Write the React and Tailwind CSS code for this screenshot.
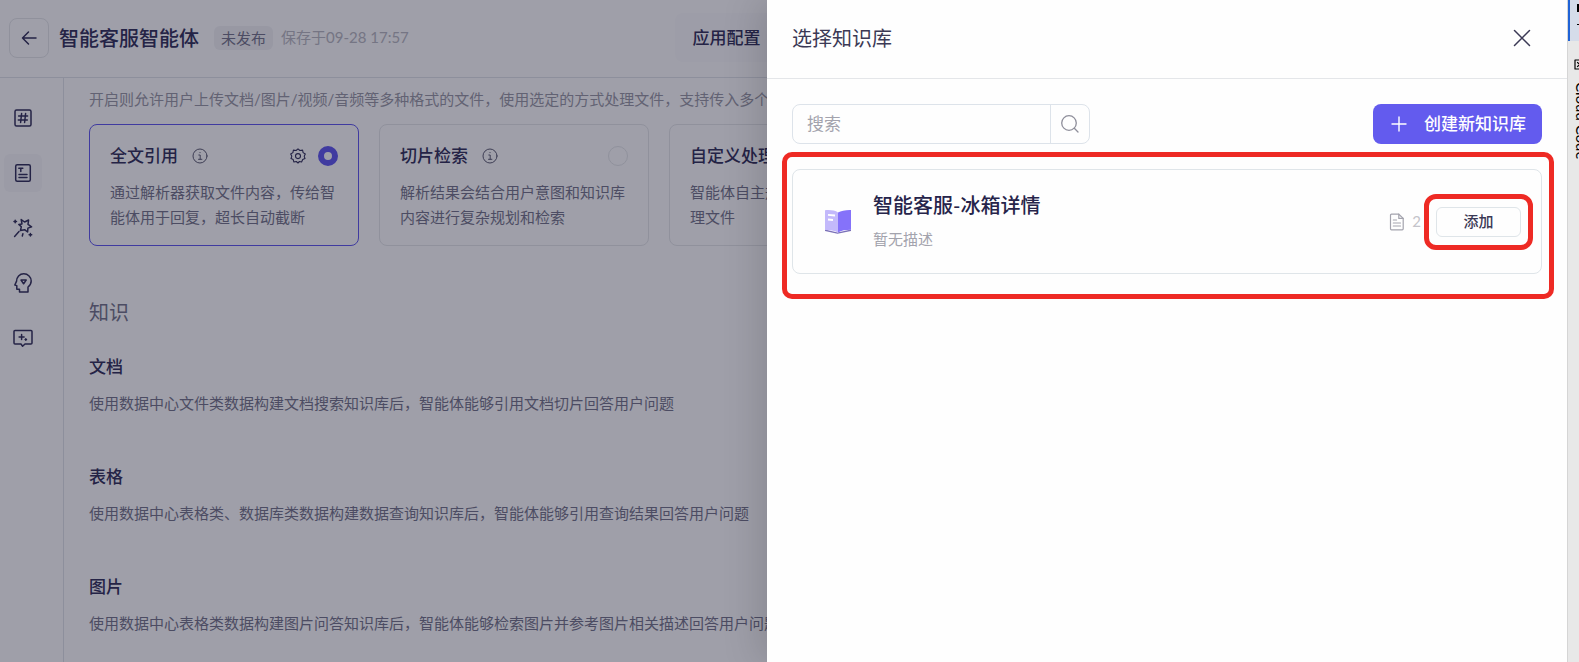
import React from "react";

const stroke = {
  fill: "none",
  stroke: "currentColor",
  strokeLinecap: "round",
  strokeLinejoin: "round",
};

function HashIcon() {
  return (
    <svg viewBox="0 0 20 20" className="size-5" strokeWidth="1.5" {...stroke}>
      <rect x="2" y="2" width="16" height="16" rx="1.5" />
      <path d="M8.6 5.5 7.6 14.5M12.6 5.5 11.6 14.5M5.6 8H14.6M5.3 12H14.3" />
    </svg>
  );
}

function TextDocIcon() {
  return (
    <svg viewBox="0 0 20 20" className="size-5" strokeWidth="1.5" {...stroke}>
      <rect x="2.7" y="1.7" width="14.6" height="16.6" rx="1.5" />
      <path d="M5.8 5.2H9.8M7.8 5.2V8.6M6 11.4H14M6 14.6H14" />
    </svg>
  );
}

function WandIcon() {
  return (
    <svg viewBox="0 0 20 20" className="size-5" strokeWidth="1.5" {...stroke}>
      <path d="M8.2 1.6 11.6 4 15.6 2 15 6.300 18.600 8.800 14.900 10.100 14.600 14 11.600 11.700 7.400 12.600 8.300 8.800 5.800 6.400 9 5.900Z" />
      <path d="M6 13.600 1.600 18.400M2.200 2.200V4.800M1 3.500H3.500M17.400 15.400V18M16.100 16.700H18.700M9.900 15.800 9.300 18" />
    </svg>
  );
}

function HeadIcon() {
  return (
    <svg viewBox="0 0 20 20" className="size-5" strokeWidth="1.5" {...stroke}>
      <path d="M6.500 19V16.200H3.800V12.600L1.800 12 3.500 8.400C3.500 4.200 6.600 .8 10.800 .8 15 .8 18.200 4.100 18.200 8 18.200 10.800 16.800 12.600 15 14V19Z" />
      <path d="M8 7H13.200L10.600 10.800Z" />
    </svg>
  );
}

function ChatSparkIcon() {
  return (
    <svg viewBox="0 0 20 20" className="size-5" strokeWidth="1.5" {...stroke}>
      <path d="M2 2.5H18A1 1 0 0 1 19 3.500V15A1 1 0 0 1 18 16H12L9.600 18.200 8 16H2A1 1 0 0 1 1 15V3.500A1 1 0 0 1 2 2.500Z" />
      <path d="M8.600 6.500V11.500M6.100 9H11.100M12.800 10.800V12.200M12.100 11.500H13.500" />
    </svg>
  );
}

function InfoIcon() {
  return (
    <svg viewBox="0 0 16 16" className="size-4 text-[#5d5d72]" strokeWidth="1" {...stroke}>
      <circle cx="8" cy="8" r="7" />
      <path d="M6.800 7H8.200V11.300M6.500 11.300H9.900M8 4.500V4.700" />
    </svg>
  );
}

function GearIcon() {
  return (
    <svg viewBox="0 0 16 16" className="size-4" strokeWidth="1.100" {...stroke}>
      <path d="M8 .9 9.900 2.500 12.600 2.100 13.100 4.600 15.300 6 14.200 8.200 15 10.600 12.700 11.600 11.600 14 9.400 13.500 8 15 6.300 13.500 3.900 14 3.200 11.600 1 10.600 1.800 8.200.7 6 2.900 4.600 3.400 2.100 6.100 2.500Z" />
      <circle cx="8" cy="8.100" r="2.500" />
    </svg>
  );
}

function BookIcon() {
  return (
    <svg viewBox="0 0 28 26" className="h-[26px] w-7">
      <path d="M1 20.500 13.500 23.500 27 20.500V22L13.500 24.800 1 22Z" fill="#7a70b8" />
      <path d="M1 1.200C6 .8 11 1.200 14 3.500V23.500C10.500 21.500 5.500 21 1 21Z" fill="#c3b9fb" />
      <path d="M14 3.500C17 1.800 22 .8 27 1V20.800C22 20.800 17 21.500 14 23.500Z" fill="#8572fa" />
      <path d="M4 5.800 11 6.500M4 10.500 9 11" stroke="#fff" strokeWidth="1.800" fill="none" />
    </svg>
  );
}

function FileIcon() {
  return (
    <svg viewBox="0 0 16 18" className="h-[18px] w-4 text-[#a3a3ad]" strokeWidth="1.200" {...stroke}>
      <path d="M2.500 1.200H9.800L14.200 5.400V15.800A1 1 0 0 1 13.200 16.800H2.500A1 1 0 0 1 1.500 15.800V2.200A1 1 0 0 1 2.500 1.200Z" />
      <path d="M9.800 1.200V5.400H14.200M4.300 7H7.500M4.300 10H11.500M4.300 13H11.500" />
    </svg>
  );
}

const navItems = [
  { label: "变量", Icon: HashIcon },
  { label: "基础配置", Icon: TextDocIcon, active: true },
  { label: "技能", Icon: WandIcon },
  { label: "记忆", Icon: HeadIcon },
  { label: "对话", Icon: ChatSparkIcon },
];

const modes = [
  { title: "全文引用", text: "通过解析器获取文件内容，传给智能体用于回复，超长自动截断", checked: true },
  { title: "切片检索", text: "解析结果会结合用户意图和知识库内容进行复杂规划和检索" },
  { title: "自定义处理", text: "智能体自主规划并调用工具进行处理文件" },
];

const sections = [
  { title: "文档", text: "使用数据中心文件类数据构建文档搜索知识库后，智能体能够引用文档切片回答用户问题" },
  { title: "表格", text: "使用数据中心表格类、数据库类数据构建数据查询知识库后，智能体能够引用查询结果回答用户问题" },
  { title: "图片", text: "使用数据中心表格类数据构建图片问答知识库后，智能体能够检索图片并参考图片相关描述回答用户问题" },
];

function ModeCard({ title, text, checked }) {
  return (
    <label
      className={`block w-[270px] shrink-0 rounded-lg border px-5 pt-[18px] pb-[15px] ${
        checked ? "border-[#6159f0]" : "border-[#e6e8ea]"
      }`}
    >
      <span className="flex h-[26px] items-center">
        <span className="text-[17px] font-medium">{title}</span>
        <span className="ml-[14px]">
          <InfoIcon />
        </span>
        <span className="ml-auto flex items-center gap-3">
          {checked && <GearIcon />}
          <input
            type="radio"
            name="mode"
            defaultChecked={checked}
            className="size-5 appearance-none rounded-full border border-[#e6e8ea] checked:border-[6px] checked:border-[#6159f0]"
          />
        </span>
      </span>
      <span className="mt-[11px] block text-[15px] leading-[25px] text-[#76768a]">{text}</span>
    </label>
  );
}

function Workspace() {
  return (
    <div className="flex h-full flex-col text-[#33315a]">
      <header className="grid h-[78px] shrink-0 grid-cols-[1fr_218px_1fr] items-center border-b border-[#e2e4ea] pb-0.5">
        <div className="flex items-center pl-[9px]">
          <button aria-label="返回" className="grid size-10 place-items-center rounded-lg border border-[#e6e8ea]">
            <svg viewBox="0 0 20 20" className="size-5" strokeWidth="1.500" {...stroke}>
              <path d="M17 10H3.500M9.500 4 3.500 10 9.500 16" />
            </svg>
          </button>
          <h1 className="ml-[10px] text-xl font-medium">智能客服智能体</h1>
          <span className="ml-[15px] rounded-md bg-[#f3f4f6] px-[7px] text-[15px] leading-6 text-[#76768a]">未发布</span>
          <span className="ml-2 text-[15px] text-[#b9b9c1]">保存于09-28 17:57</span>
        </div>
        <nav className="rounded-lg bg-[#fcfcfd] py-3 pl-[18px]">
          <a href="#config" className="text-[17px] font-medium">应用配置</a>
        </nav>
      </header>
      <div className="flex min-h-0 flex-1">
        <aside className="flex w-16 shrink-0 flex-col gap-[17px] border-r border-[#e2e4ea] pt-[21px] pl-1">
          {navItems.map(({ label, Icon, active }) => (
            <button
              key={label}
              aria-label={label}
              className={`grid size-[38px] place-items-center rounded-md ${active ? "bg-[#f9f9fb]" : ""}`}
            >
              <Icon />
            </button>
          ))}
        </aside>
        <main className="min-w-0 flex-1 overflow-hidden pt-[9px] pl-[25px]">
          <p className="text-[15px] leading-[25px] whitespace-nowrap text-[#9a9aa6]">
            开启则允许用户上传文档/图片/视频/音频等多种格式的文件，使用选定的方式处理文件，支持传入多个文件
          </p>
          <div className="mt-3 flex gap-5">
            {modes.map((mode) => (
              <ModeCard key={mode.title} {...mode} />
            ))}
          </div>
          <h2 className="mt-[51px] text-xl leading-[30px] text-[#76768a]">知识</h2>
          <div className="mt-[27px] flex flex-col gap-12">
            {sections.map(({ title, text }) => (
              <section key={title}>
                <h3 className="text-[17px] leading-[26px] font-medium">{title}</h3>
                <p className="mt-[11px] text-[15px] leading-[25px] whitespace-nowrap text-[#76768a]">{text}</p>
              </section>
            ))}
          </div>
        </main>
      </div>
    </div>
  );
}

function KnowledgeDrawer() {
  return (
    <section
      role="dialog"
      aria-label="选择知识库"
      className="absolute inset-y-0 right-0 w-[800px] max-w-full bg-[#fefefe] text-[#3b3955] shadow-[-8px_0_36px_rgba(0,0,0,0.14)]"
    >
      <header className="flex h-[79px] items-center justify-between border-b border-[#e4e6e9] pr-[35px] pb-0.5 pl-[25px]">
        <h2 className="text-xl">选择知识库</h2>
        <button aria-label="关闭" className="size-5">
          <svg viewBox="0 0 20 20" className="size-5" strokeWidth="1.500" {...stroke}>
            <path d="M2.500 2.500 17.500 17.500M17.500 2.500 2.500 17.500" />
          </svg>
        </button>
      </header>
      <div className="px-[25px] pt-[25px]">
        <div className="flex items-center justify-between">
          <form className="flex h-10 w-[298px] rounded-lg border border-[#dde3ea]">
            <input
              aria-label="搜索"
              placeholder="搜索"
              className="min-w-0 flex-1 rounded-l-lg pl-[14px] text-[17px] outline-none placeholder:text-[#a3a3ad]"
            />
            <button aria-label="搜索知识库" type="button" className="grid w-[39px] place-items-center border-l border-[#dde3ea] text-[#8f8f9b]">
              <svg viewBox="0 0 20 20" className="size-5" strokeWidth="1.300" {...stroke}>
                <circle cx="9" cy="9" r="7.300" />
                <path d="M14.300 14.300 18 18" />
              </svg>
            </button>
          </form>
          <button className="flex h-10 items-center gap-[17px] rounded-lg bg-[#635bee] pr-4 pl-[18px] text-[17px] font-medium text-white">
            <svg viewBox="0 0 16 16" className="size-4" strokeWidth="1.400" {...stroke}>
              <path d="M8 1V15M1 8H15" />
            </svg>
            创建新知识库
          </button>
        </div>
        <div className="relative mt-[25px]">
          <article className="flex h-[105px] items-center rounded-lg border border-[#dfe5e9] pr-5 pl-[31px]">
            <BookIcon />
            <div className="ml-[21px]">
              <h3 className="text-xl leading-[30px] font-medium text-[#26244a]">智能客服-冰箱详情</h3>
              <p className="mt-1 text-[15px] leading-[30px] text-[#a3a3ad]">暂无描述</p>
            </div>
            <div className="ml-auto flex items-center">
              <FileIcon />
              <span className="ml-[7px] text-[15px] text-[#c4c4ca]">2</span>
              <div className="relative ml-[15px]">
                <button className="block h-[30px] w-[85px] rounded-md border border-[#dfe5e9] text-[15px] font-medium">添加</button>
                <div className="pointer-events-none absolute -inset-x-3 -inset-y-[13px] rounded-xl border-[5px] border-[#ee2a24]" />
              </div>
            </div>
          </article>
          <div className="pointer-events-none absolute -top-[17px] -right-3 -bottom-[25px] -left-[10px] rounded-[10px] border-[5px] border-[#ee2a24]" />
        </div>
      </div>
    </section>
  );
}

export default function App() {
  return (
    <div className="flex h-screen overflow-hidden bg-white font-['Lato','Noto_Sans_CJK_SC',sans-serif]">
      <div className="relative min-w-0 flex-1 overflow-hidden">
        <Workspace />
        <div className="absolute inset-0 bg-[#0f0f28]/40" />
        <KnowledgeDrawer />
      </div>
      <aside className="w-3 shrink-0 overflow-hidden border-l border-[#d5d5d5] bg-[#e8e8e8] text-black">
        <div className="flex h-[41px] flex-col items-end gap-3 border-l-2 border-[#1f63d6] bg-[#d5dcea] pt-1">
          <span className="h-2 w-0.5 bg-black" />
          <span className="h-px w-0.5 bg-black" />
        </div>
        <div className="mt-[18px] ml-1.5">
          <svg viewBox="0 0 11 11" className="size-[11px]" strokeWidth="1.200" {...stroke}>
            <path d="M1 1H10V10H1ZM3.500 3.500 6 5.500 3.500 7.500" />
          </svg>
          <span className="mt-3 block w-4 text-[15px] leading-4 whitespace-nowrap [writing-mode:vertical-rl]">Cloud Code</span>
        </div>
      </aside>
    </div>
  );
}
